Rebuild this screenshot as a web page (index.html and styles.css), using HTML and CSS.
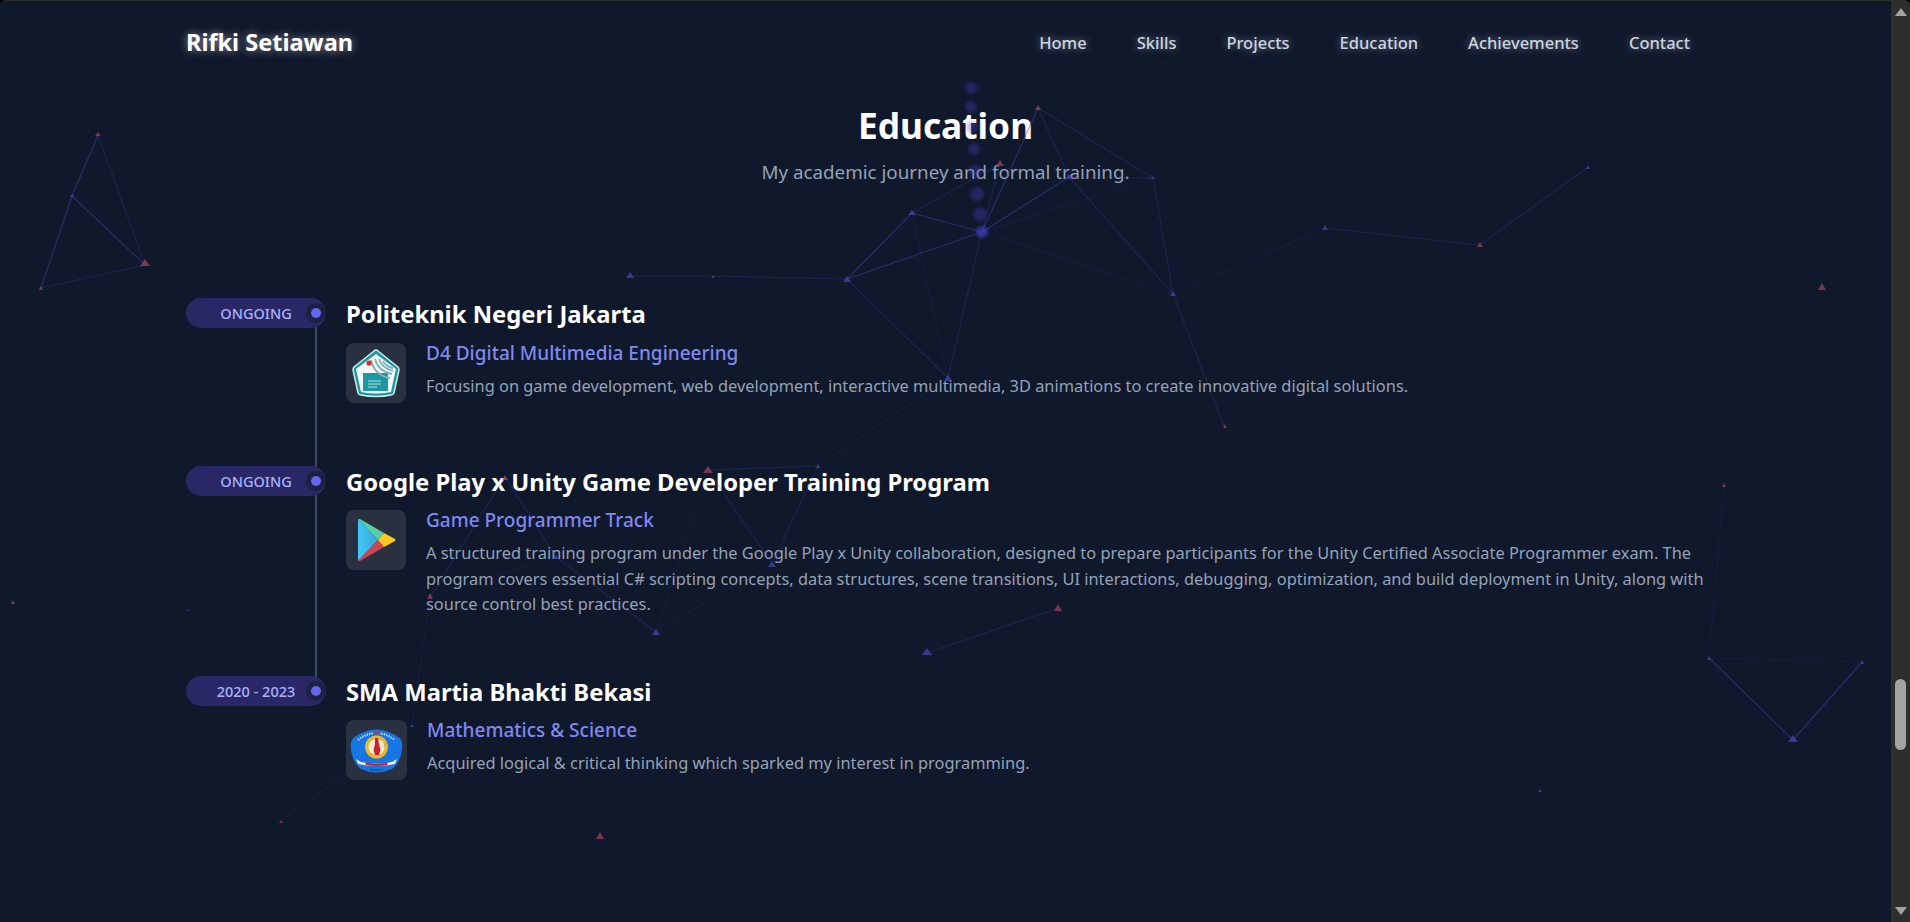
FILE: index.html
```html
<!DOCTYPE html>
<html lang="en">
<head>
<meta charset="utf-8">
<title>Rifki Setiawan</title>
<link rel="stylesheet" href="styles.css">
</head>
<body>
<div class="window">
  <div class="page">
    <svg class="network" viewBox="0 0 1891 922" width="1891" height="922" aria-hidden="true">
      <g class="links bright">
        <path d="M98 135L72 196L41 288M72 196L145 265M912 213L982 232M982 232L1069 177M1038 108L982 232M912 213L847 279M847 279L982 232M1793 740L1709 658M1793 740L1862 662"/>
      </g>
      <g class="links mid">
        <path d="M98 135L145 265M41 288L145 265M1000 164L982 232M1000 164L912 213M1038 108L1153 178M1038 108L1069 177M1153 178L1173 294M982 232L948 378M847 279L948 378M1069 177L1173 294M1069 177L1153 178M847 279L713 276L630 276M1325 228L1480 245L1588 167M1173 294L1224 426M505 477L556 557L656 632M708 470L818 466M708 470L772 564M818 466L772 564M505 477L430 597M1058 608L927 653"/>
      </g>
      <g class="links faint">
        <path d="M982 232L1153 178M982 232L1173 294M1173 294L1325 228M912 213L948 378M948 378L818 466M708 470L656 632M772 564L656 632M430 597L556 557M430 597L412 725M281 821L412 725M1709 658L1862 662M1709 658L1724 485"/>
      </g>
      <g class="nodes-blue">
        <path d="M72 194l2 3h-4zM912 210l4 5h-8zM847 276l4 6h-8zM1069 174l4 5h-8zM1153 176l2 3h-4zM1173 291l3 5h-6zM948 375l4 6h-8zM1325 225l3 5h-6zM1588 165l2 4h-4zM713 275l2 3h-4zM630 272l4 6h-8zM656 629l4 6h-8zM772 561l4 6h-8zM818 464l2 4h-4zM556 555l3 4h-6zM927 648l5 7h-10zM1709 656l2 4h-4zM1862 660l2 4h-4zM1793 735l5 7h-10zM1540 789l2 3h-4zM412 724l2 3h-4zM188 609l1 2h-2z"/>
      </g>
      <g class="nodes-red">
        <path d="M98 132l3 4h-6zM145 259l5 7h-10zM41 286l2 4h-4zM1038 105l3 5h-6zM1000 160l4 6h-8zM1480 242l3 5h-6zM1225 424l2 4h-4zM1822 283l4 7h-8zM1724 483l2 4h-4zM1058 604l4 7h-8zM708 466l5 7h-10zM505 475l3 5h-6zM430 593l3 6h-6zM281 820l2 3h-4zM600 832l4 7h-8zM13 600l2 4h-4z"/>
      </g>
      <g class="dots">
        <circle cx="971" cy="88" r="6"/><circle cx="971" cy="107" r="6"/><circle cx="972" cy="127" r="6"/><circle cx="974" cy="149" r="6"/><circle cx="975" cy="171" r="6"/><circle cx="977" cy="194" r="7"/><circle cx="980" cy="214" r="7"/>
        <circle class="hub" cx="982" cy="232" r="6"/>
      </g>
    </svg>
    <div class="container">
      <header class="topbar">
        <a class="brand">Rifki Setiawan</a>
        <nav class="menu">
          <a>Home</a><a>Skills</a><a>Projects</a><a>Education</a><a>Achievements</a><a>Contact</a>
        </nav>
      </header>
      <section class="section">
        <div class="section-head">
          <h1>Education</h1>
          <p>My academic journey and formal training.</p>
        </div>
        <div class="timeline">
          <article class="entry first">
            <div class="pill"><span class="when">ONGOING</span><span class="dot"></span></div>
            <div class="body">
              <h2>Politeknik Negeri Jakarta</h2>
              <div class="row">
                <div class="logo">
                  <svg viewBox="0 0 60 60" width="60" height="60">
                    <path d="M30 7Q31 7 32 8L52 24Q53 25 53 27L48 50Q47 52 45 52Q30 55 15 52Q13 52 12 50L7 27Q7 25 8 24L28 8Q29 7 30 7Z" fill="#1c98a0" stroke="#cfeced" stroke-width="1.5"/>
                    <path d="M30 11L50 26L45 49Q30 52 15 49L10 26Z" fill="#f5f9f9"/>
                    <rect x="17" y="30" width="25" height="18" fill="#1b98a1"/>
                    <path d="M25 17C27 26 32 33 44 35M29 16C31 24 36 29 46 31M33 16C35 22 39 26 47 28M37 18C39 22 42 24 47 25" stroke="#7fb2bb" stroke-width="1.8" fill="none"/>
                    <circle cx="23" cy="20" r="2.6" fill="#e3262a"/>
                    <path d="M22 38h13M22 41h13M22 44h9" stroke="#cfeaec" stroke-width=".9"/>
                  </svg>
                </div>
                <div class="copy">
                  <h3>D4 Digital Multimedia Engineering</h3>
                  <p>Focusing on game development, web development, interactive multimedia, 3D animations to create innovative digital solutions.</p>
                </div>
              </div>
            </div>
          </article>
          <article class="entry second">
            <div class="pill"><span class="when">ONGOING</span><span class="dot"></span></div>
            <div class="body">
              <h2>Google Play x Unity Game Developer Training Program</h2>
              <div class="row">
                <div class="logo">
                  <svg viewBox="0 0 60 60" width="60" height="60">
                    <defs><linearGradient id="pb" x1="0" y1="0" x2="1" y2="0"><stop offset="0" stop-color="#3ec7f5"/><stop offset="1" stop-color="#38a8de"/></linearGradient></defs>
                    <path d="M12 9L32 30L12 51Z" fill="url(#pb)"/>
                    <path d="M12 9L14 9L38 23L32 30Z" fill="#56cfa2"/>
                    <path d="M12 51L32 30L38 37L14 51Z" fill="#cf4453"/>
                    <path d="M38 23L49 29Q50 30 49 31L38 37L32 30Z" fill="#fdc921"/>
                  </svg>
                </div>
                <div class="copy">
                  <h3>Game Programmer Track</h3>
                  <p>A structured training program under the Google Play x Unity collaboration, designed to prepare participants for the Unity Certified Associate Programmer exam. The program covers essential C# scripting concepts, data structures, scene transitions, UI interactions, debugging, optimization, and build deployment in Unity, along with source control best practices.</p>
                </div>
              </div>
            </div>
          </article>
          <article class="entry third">
            <div class="pill"><span class="when">2020 - 2023</span><span class="dot"></span></div>
            <div class="body">
              <h2>SMA Martia Bhakti Bekasi</h2>
              <div class="row">
                <div class="logo wide">
                  <svg viewBox="0 0 61 60" width="61" height="60">
                    <path d="M7 18Q30 1 54 18Q57 22 56 30Q54 43 46 49Q30 56 15 49Q7 43 5 30Q4 22 7 18Z" fill="#1676e4"/>
                    <path d="M12 20Q30 6 49 20" fill="none" stroke="#b9d2ea" stroke-width="2.2" stroke-dasharray="1.5 1"/>
                    <circle cx="30.500" cy="27" r="11.500" fill="#e9b92a"/>
                    <circle cx="30.500" cy="27" r="8" fill="#f5ecd8"/>
                    <path d="M29 18h3l1 6 1.500 6-1.500 5h-4l-1.500-5 1.500-6z" fill="#cf2128"/>
                    <path d="M10 39L15 42Q30 45 46 42L51 39L49 44Q30 48 12 44Z" fill="#f4f4f4"/>
                    <path d="M19 42.500Q30 44.500 42 42.500L41 45Q30 47 20 45Z" fill="#cf2128"/>
                    <path d="M27 13h7" stroke="#cf2128" stroke-width="1.800"/>
                    <path d="M24 50h13" stroke="#0b3f8a" stroke-width="1.500" stroke-dasharray="1.500 1"/>
                  </svg>
                </div>
                <div class="copy">
                  <h3>Mathematics &amp; Science</h3>
                  <p>Acquired logical &amp; critical thinking which sparked my interest in programming.</p>
                </div>
              </div>
            </div>
          </article>
        </div>
      </section>
    </div>
  </div>
  <aside class="scrollbar">
    <span class="arrow up"></span>
    <div class="track"><span class="thumb"></span></div>
    <span class="arrow down"></span>
  </aside>
</div>
</body>
</html>
```

FILE: styles.css
```css
* { box-sizing: border-box; }
html, body { margin: 0; height: 100%; }
body {
  background: #000;
  font-family: "Noto Sans", "Open Sans", "Liberation Sans", sans-serif;
  overflow: hidden;
}
.window {
  display: flex;
  width: 1910px;
  height: 922px;
  border-top: 1px solid #2e2e2e;
  background: #2e2e2e;
  border-radius: 6px 6px 0 0;
  overflow: hidden;
}
.page {
  position: relative;
  flex: 1;
  background: #10182b;
  overflow: hidden;
}
.network {
  position: absolute;
  left: 0;
  top: -1px;
  z-index: 1;
  pointer-events: none;
}
.links { filter: blur(.5px); }
.links path { stroke: #4343b4; stroke-width: 1.2; fill: none; }
.links.bright path { opacity: .48; }
.links.mid path { opacity: .26; }
.links.faint path { opacity: .13; }
.nodes-blue { filter: blur(.4px); }
.nodes-red { filter: blur(.4px); }
.nodes-blue path { fill: #4444b0; opacity: .75; }
.nodes-red path { fill: #a8425c; opacity: .7; }
.dots { filter: blur(1.5px); }
.dots circle { fill: #4f46e5; opacity: .3; }
.dots .hub { opacity: .55; }
.container {
  position: relative;
  width: 1519px;
  margin: 0 auto;
}
.topbar {
  display: flex;
  justify-content: space-between;
  align-items: center;
  height: 82px;
  padding-right: 15px;
}
.brand {
  font-size: 23.500px;
  font-weight: 700;
  color: #fff;
  text-shadow: 0 0 8px rgba(255,255,255,.55);
}
.menu { display: flex; gap: 50px; }
.menu a {
  font-size: 16.500px;
  font-weight: 500;
  color: #cbd5e1;
  text-shadow: 0 0 8px rgba(203,213,225,.55);
}
.section-head { text-align: center; }
.section-head h1 {
  margin: 20px 0 0;
  font-size: 35.300px;
  line-height: 44px;
  font-weight: 700;
  color: #fff;
}
.section-head p {
  margin: 11px 0 0;
  font-size: 18.800px;
  line-height: 28px;
  color: #94a3b8;
}
.timeline { margin-top: 112px; }
.entry { display: flex; gap: 20px; position: relative; }
.entry.first { height: 168px; }
.entry.second { height: 210px; }
.pill {
  position: relative;
  flex: none;
  display: flex;
  align-items: center;
  width: 140px;
  height: 30px;
  background: #2a2766;
  border-radius: 15px;
}
.when {
  width: 140px;
  text-align: center;
  font-size: 14.500px;
  font-weight: 500;
  color: #a5b4fc;
}
.dot {
  position: absolute;
  right: 0;
  top: 0;
  width: 20px;
  height: 30px;
  display: block;
  z-index: 1;
}
.dot::before {
  content: "";
  position: absolute;
  left: 0;
  top: 5px;
  width: 20px;
  height: 20px;
  border-radius: 50%;
  background: #1e2140;
}
.dot::after {
  content: "";
  position: absolute;
  left: 5px;
  top: 10px;
  width: 10px;
  height: 10px;
  border-radius: 50%;
  background: #6366f1;
}
.entry.first::before, .entry.second::before {
  content: "";
  position: absolute;
  left: 129px;
  width: 2px;
  top: 25px;
  bottom: -20px;
  background: #3a4a63;
}
.body { flex: 1; min-width: 0; }
.body h2 {
  margin: 0;
  font-size: 23.800px;
  line-height: 32px;
  font-weight: 700;
  color: #fff;
}
.row { display: flex; gap: 20px; margin-top: 12px; }
.first .row { margin-top: 13px; }
.logo {
  flex: none;
  width: 60px;
  height: 60px;
  display: flex;
  align-items: center;
  justify-content: center;
  background: #293040;
  border-radius: 8px;
}
.logo.wide { width: 61px; }
.copy h3 {
  margin: 0;
  font-size: 19px;
  line-height: 20px;
  font-weight: 500;
  color: #7f89f2;
}
.copy p {
  margin: 10px 0 0;
  font-size: 16.400px;
  line-height: 25.600px;
  color: #94a3b8;
}
.scrollbar {
  flex: none;
  width: 19px;
  display: flex;
  flex-direction: column;
  align-items: center;
  background: #2e2e2e;
}
.track { flex: 1; width: 100%; position: relative; }
.thumb {
  position: absolute;
  left: 4px;
  top: 656px;
  width: 11px;
  height: 71px;
  border-radius: 6px;
  background: #a3a3a3;
}
.arrow {
  flex: none;
  width: 0;
  height: 0;
  margin: 7px 0;
  border-left: 6px solid transparent;
  border-right: 6px solid transparent;
}
.arrow.up { border-bottom: 8px solid #a3a3a3; }
.arrow.down { border-top: 8px solid #a3a3a3; }
```
